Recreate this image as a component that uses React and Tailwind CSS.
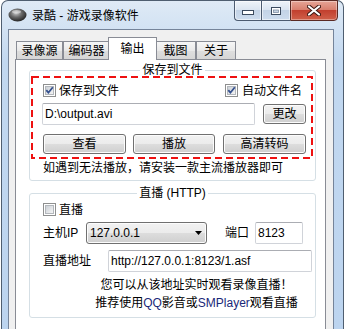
import React from "react";

function CheckBox({ checked }) {
  return (
    <svg width="13" height="13" viewBox="0 0 13 13" className="shrink-0 block">
      <defs>
        <linearGradient id="cbg" x1="0" y1="0" x2="1" y2="1">
          <stop offset="0" stopColor="#c9ced4" />
          <stop offset="1" stopColor="#f7f7f7" />
        </linearGradient>
      </defs>
      <rect x="0.5" y="0.5" width="12" height="12" fill="#ffffff" stroke="#8e8f8f" />
      <rect x="2.5" y="2.5" width="8" height="8" fill="url(#cbg)" stroke="#b3b7bc" />
      {checked && (
        <path d="M3.3 6.2 L5.4 8.7 L9.8 3.3" fill="none" stroke="#34508e" strokeWidth="1.8" />
      )}
    </svg>
  );
}

function Btn({ w, children }) {
  return (
    <div
      className={`${w} h-[20px] flex items-center justify-center border border-[#707070] rounded-[3px] bg-[linear-gradient(to_bottom,#f2f2f2_0%,#ebebeb_50%,#dddddd_50%,#cfcfcf_100%)] shadow-[inset_0_0_0_1px_#fcfcfc] text-[12px] leading-[14px] text-black`}
    >
      {children}
    </div>
  );
}

function Tab({ w, children }) {
  return (
    <div
      className={`${w} h-[18px] flex items-center justify-center border border-b-0 border-[#898c95] bg-[linear-gradient(to_bottom,#f6f6f6,#e9e9e9_50%,#dedede_51%,#d6d6d6)] text-[12px] leading-[14px]`}
    >
      {children}
    </div>
  );
}

function CaptionButtons() {
  return (
    <div className="flex -mt-[1px] ml-auto mr-[5px] h-[21px]">
      <div className="w-[27px] h-full border border-r-0 border-[#4c5b70] rounded-bl-[4px] bg-[linear-gradient(to_bottom,#eef3f9_0%,#dbe5f1_45%,#c3d3e6_50%,#cddcee_100%)] shadow-[inset_0_0_0_1px_rgba(255,255,255,0.55)] flex items-center justify-center">
        <svg width="12" height="5" viewBox="0 0 12 5" className="mt-[4px]">
          <rect x="0.5" y="0.5" width="11" height="4" fill="#ffffff" stroke="#3b4a5e" />
        </svg>
      </div>
      <div className="w-[29px] h-full border border-r-0 border-[#4c5b70] bg-[linear-gradient(to_bottom,#eef3f9_0%,#dbe5f1_45%,#c3d3e6_50%,#cddcee_100%)] shadow-[inset_0_0_0_1px_rgba(255,255,255,0.55)] flex items-center justify-center">
        <svg width="10" height="8" viewBox="0 0 10 8">
          <rect x="0.5" y="0.5" width="9" height="7" fill="#ffffff" stroke="#3b4a5e" />
          <rect x="2.5" y="3" width="5" height="2.5" fill="#c9d5e4" stroke="#7e8ea3" strokeWidth="0.8" />
        </svg>
      </div>
      <div className="w-[48px] h-full border border-[#5a2a24] rounded-br-[4px] bg-[linear-gradient(to_bottom,#e6a597_0%,#d9806f_45%,#c2402f_50%,#d0604a_100%)] shadow-[inset_0_0_0_1px_rgba(255,255,255,0.35)] flex items-center justify-center">
        <svg width="14" height="11" viewBox="0 0 14 11">
          <path d="M2 1.5 L12 9.5 M12 1.5 L2 9.5" stroke="#3a1510" strokeWidth="4" strokeLinecap="round" />
          <path d="M2 1.5 L12 9.5 M12 1.5 L2 9.5" stroke="#ffffff" strokeWidth="2.2" strokeLinecap="round" />
        </svg>
      </div>
    </div>
  );
}

export default function App() {
  return (
    <div className="w-[344px] h-[329px] bg-white overflow-hidden font-[family-name:'Liberation_Sans','Noto_Sans_CJK_SC',sans-serif] text-black">
      <div className="ml-[1px] w-[343px] h-[329px] flex flex-col border-l border-r border-t border-[#4f5e70] rounded-t-[7px] bg-[linear-gradient(to_bottom,#dfeaf6_0px,#d2e2f3_28px,#c2d8f0_60px,#bcd4ef_100%)]">
        {/* Title bar */}
        <div className="h-[28px] flex items-start shrink-0">
          <div className="flex items-center h-[28px] pl-[6px]">
            <svg width="19" height="14" viewBox="0 0 19 14" className="block">
              <defs>
                <radialGradient id="ball" cx="0.42" cy="0.35" r="0.7">
                  <stop offset="0" stopColor="#c8c8c8" />
                  <stop offset="0.45" stopColor="#6a6a6a" />
                  <stop offset="1" stopColor="#1c1c1c" />
                </radialGradient>
              </defs>
              <ellipse cx="9.5" cy="7" rx="9" ry="6.5" fill="url(#ball)" />
              <ellipse cx="8.5" cy="3.8" rx="4.5" ry="1.8" fill="#ffffff" opacity="0.45" />
            </svg>
            <span className="ml-[5px] text-[12px] leading-[14px] mt-[1px]">录酷 - 游戏录像软件</span>
          </div>
          <CaptionButtons />
        </div>

        {/* Client area */}
        <div className="ml-[6px] mr-[9px] flex-1 min-h-0 overflow-hidden border border-b-0 border-[#75849a] bg-[#f0f0f0] pl-[6px] pr-[7px] pt-[7px]">
          {/* Tabs */}
          <div className="flex items-end h-[22px] pl-[1px]">
            <Tab w="w-[47px]">录像源</Tab>
            <Tab w="w-[47px]">编码器</Tab>
            <div className="relative z-10 -mx-[2px] -mb-[1px] w-[49px] h-[23px] bg-white border border-b-0 border-[#898c95] flex items-center justify-center text-[12px] leading-[14px]">
              输出
            </div>
            <Tab w="w-[41px]">截图</Tab>
            <Tab w="w-[40px]">关于</Tab>
          </div>

          {/* Pane */}
          <div className="border border-[#898c95] bg-white h-[300px] flex flex-col">
            {/* Group 1 */}
            <fieldset className="mt-[4px] ml-[13px] mr-[9px] border border-[#d5dfe5] rounded-[3px] pb-[3px]">
              <legend align="center" className="mx-auto px-[2px] text-[12px] leading-[13px]">
                保存到文件
              </legend>
              <div className="relative ml-[1px] -mt-[1px] w-[282px] h-[83px] pt-[8px] pl-[12px] pr-[7px]">
                <svg width="282" height="83" viewBox="0 0 282 83" className="absolute left-0 top-0 pointer-events-none">
                  <rect x="1" y="1" width="280" height="81" fill="none" stroke="#ee1111" strokeWidth="2" strokeDasharray="7 4" />
                </svg>
                <div className="flex items-center h-[13px]">
                  <CheckBox checked />
                  <span className="ml-[3px] text-[12px] leading-[14px]">保存到文件</span>
                  <div className="ml-auto mr-[4px] flex items-center">
                    <CheckBox checked />
                    <span className="ml-[4px] text-[12px] leading-[14px]">自动文件名</span>
                  </div>
                </div>
                <div className="flex items-start mt-[6px]">
                  <div className="-ml-[1px] w-[213px] h-[22px] border border-[#d0d3d9] border-t-[#abadb3] rounded-[2px] bg-white flex items-center pl-[2px] text-[12px] leading-[14px]">
                    D:\output.avi
                  </div>
                  <div className="ml-[8px] mt-[1px]">
                    <Btn w="w-[43px]">更改</Btn>
                  </div>
                </div>
                <div className="flex mt-[9px]">
                  <Btn w="w-[83px]">查看</Btn>
                  <div className="ml-[7px]">
                    <Btn w="w-[82px]">播放</Btn>
                  </div>
                  <div className="ml-[8px]">
                    <Btn w="w-[83px]">高清转码</Btn>
                  </div>
                </div>
              </div>
              <div className="pl-[13px] text-[12px] leading-[18px]">如遇到无法播放，请安装一款主流播放器即可</div>
            </fieldset>

            {/* Group 2 */}
            <fieldset className="mt-[6px] ml-[13px] mr-[9px] border border-[#d5dfe5] rounded-[3px] pb-[5px]">
              <legend align="center" className="mx-auto px-[2px] text-[12px] leading-[13px]">
                直播 (HTTP)
              </legend>
              <div className="pl-[13px] mt-[3px] flex items-center h-[13px]">
                <CheckBox />
                <span className="ml-[3px] text-[12px] leading-[14px]">直播</span>
              </div>
              <div className="pl-[13px] mt-[6px] flex items-center h-[22px] text-[12px] leading-[14px]">
                <span className="w-[43px]">主机IP</span>
                <div className="w-[121px] h-[22px] border border-[#707070] rounded-[3px] bg-[linear-gradient(to_bottom,#f2f2f2_0%,#ebebeb_50%,#dddddd_50%,#cfcfcf_100%)] shadow-[inset_0_0_0_1px_#fcfcfc] flex items-center pl-[3px] pr-[4px]">
                  <span>127.0.0.1</span>
                  <svg width="7" height="4" viewBox="0 0 7 4" className="ml-auto block">
                    <path d="M0 0 H7 L3.5 4 Z" fill="#000000" />
                  </svg>
                </div>
                <span className="ml-[18px] w-[24px]">端口</span>
                <div className="ml-[6px] w-[48px] h-[22px] border border-[#d0d3d9] border-t-[#abadb3] rounded-[2px] bg-white flex items-center pl-[2px]">
                  8123
                </div>
              </div>
              <div className="pl-[13px] mt-[6px] flex items-center h-[22px] text-[12px] leading-[14px]">
                <span className="w-[65px]">直播地址</span>
                <div className="w-[204px] h-[22px] border border-[#d0d3d9] border-t-[#abadb3] rounded-[2px] bg-white flex items-center pl-[2px]">
                  http://127.0.0.1:8123/1.asf
                </div>
              </div>
              <div className="mt-[4px] pl-[48px] flex flex-col items-center text-[12px] leading-[18px]">
                <div>您可以从该地址实时观看录像直播！</div>
                <div>
                  推荐使用<span className="text-[#1a2878]">QQ</span>影音或<span className="text-[#1a2878]">SMPlayer</span>观看直播
                </div>
              </div>
            </fieldset>
          </div>
        </div>
      </div>
    </div>
  );
}
